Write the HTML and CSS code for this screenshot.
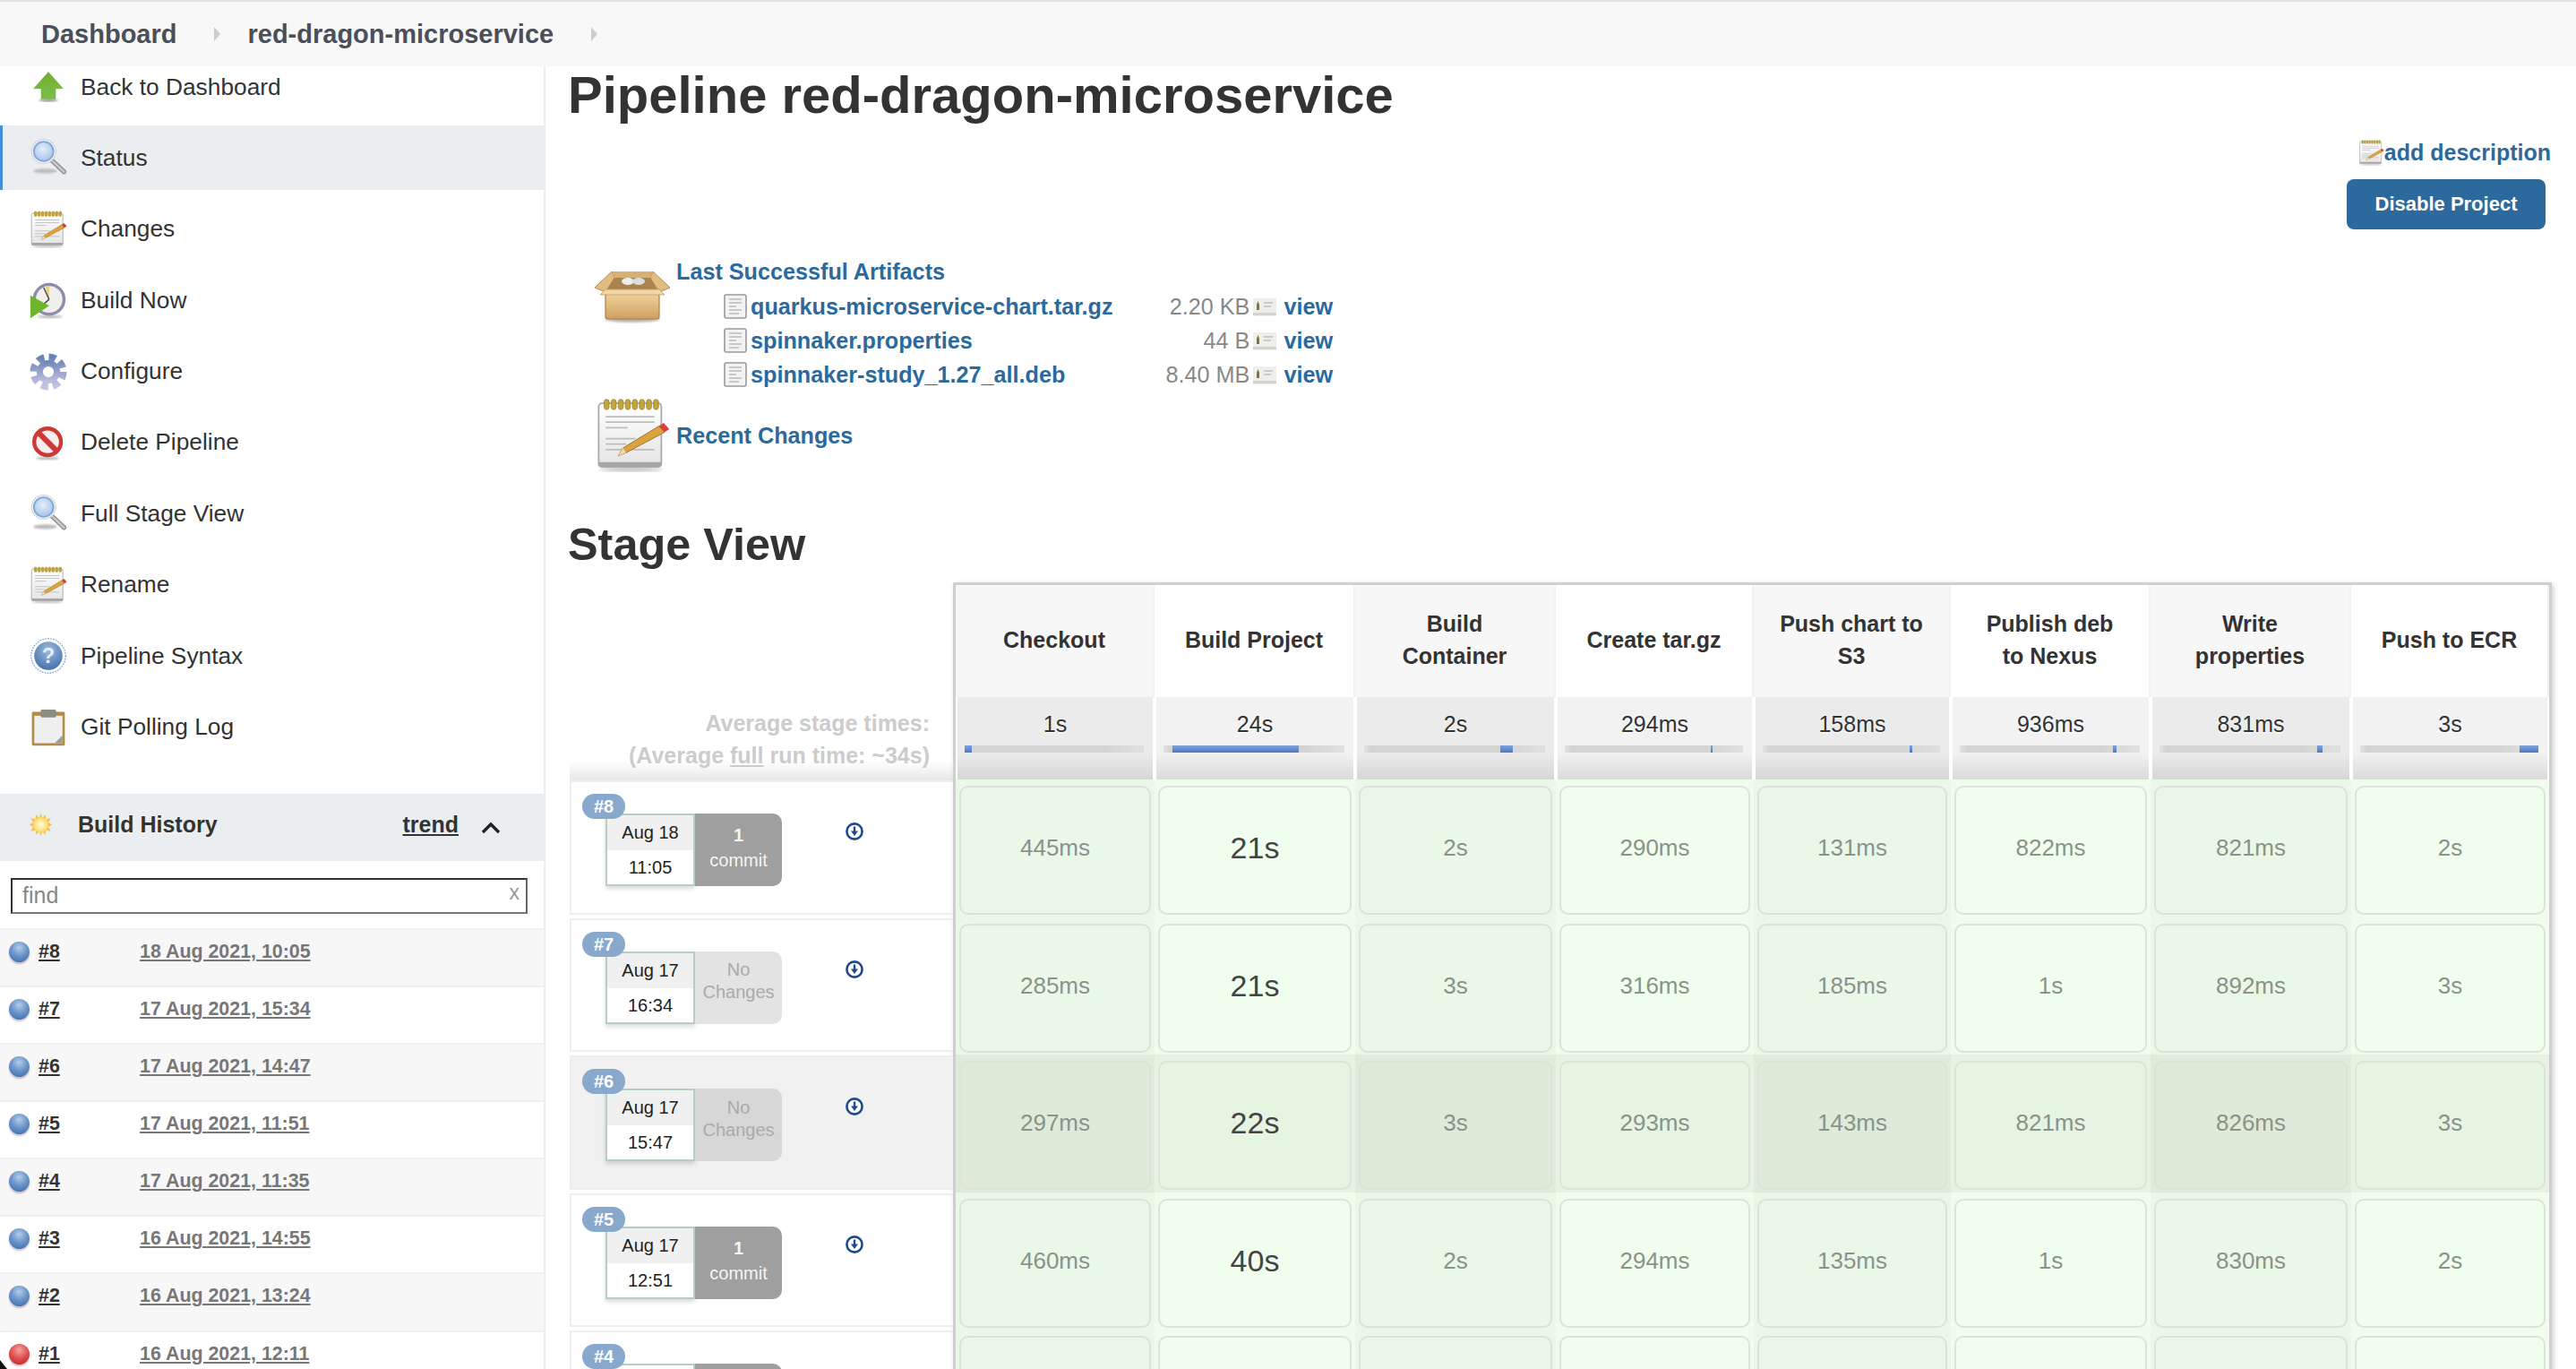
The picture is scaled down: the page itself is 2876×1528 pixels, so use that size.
FILE: index.html
```html
<!DOCTYPE html>
<html lang="en">
<head>
    <meta charset="UTF-8">
    <title>red-dragon-microservice [Jenkins]</title>
    <link rel="stylesheet" href="styles.css">
</head>
<body>
    <!-- shared icons -->
    <svg class="svg-defs" aria-hidden="true">
        <defs>
            <filter id="soft"><feGaussianBlur stdDeviation="1.4"/></filter>
            <linearGradient id="gArrow" x1="0" y1="0" x2="0" y2="1"><stop offset="0" stop-color="#6fae2f"/><stop offset="1" stop-color="#7cc04a"/></linearGradient>
            <radialGradient id="gLens" cx=".45" cy=".4" r=".6"><stop offset="0" stop-color="#e6effa"/><stop offset="1" stop-color="#a6c4ea"/></radialGradient>
            <linearGradient id="gPage" x1="0" y1="0" x2="0" y2="1"><stop offset="0" stop-color="#fff"/><stop offset="1" stop-color="#e4e4e4"/></linearGradient>
            <linearGradient id="gGear" x1="0" y1="0" x2="0" y2="1"><stop offset="0" stop-color="#6b82b4"/><stop offset="1" stop-color="#c6c4e4"/></linearGradient>
            <radialGradient id="gHelp" cx=".5" cy=".3" r=".75"><stop offset="0" stop-color="#9dbbe0"/><stop offset="1" stop-color="#3f6ca8"/></radialGradient>
            <radialGradient id="gSun" cx=".5" cy=".5" r=".5"><stop offset="0" stop-color="#fffde0"/><stop offset="1" stop-color="#f9d65c"/></radialGradient>
            <linearGradient id="gBox" x1="0" y1="0" x2="0" y2="1"><stop offset="0" stop-color="#f0d29c"/><stop offset="1" stop-color="#cf9f60"/></linearGradient>

            <symbol id="i-up" viewBox="0 0 48 48">
                <ellipse cx="24" cy="41" rx="12" ry="2" fill="#999" filter="url(#soft)"/>
                <path d="M24 5 42.5 26H33V39H15V26H5.5Z" fill="url(#gArrow)" stroke="#5f9c28" stroke-width=".6"/>
            </symbol>
            <symbol id="i-search" viewBox="0 0 48 48">
                <ellipse cx="20" cy="41" rx="15" ry="3" fill="#bbb" filter="url(#soft)"/>
                <path d="M28 27 44 42" stroke="#8f8f8f" stroke-width="6" stroke-linecap="round"/>
                <path d="M28 27 44 42" stroke="#c9c9c9" stroke-width="3" stroke-linecap="round"/>
                <circle cx="18" cy="16" r="15.5" fill="#f1f1f1" stroke="#c5c5c5" stroke-width="1.2" stroke-dasharray="2 1"/>
                <circle cx="18" cy="16" r="12.5" fill="url(#gLens)" stroke="#7fa6da" stroke-width="2"/>
            </symbol>
            <symbol id="i-notepad" viewBox="0 0 48 48">
                <ellipse cx="23" cy="45.5" rx="20" ry="1.6" fill="#bbb" filter="url(#soft)"/>
                <rect x="2.5" y="3.5" width="40" height="40.5" rx="2" fill="url(#gPage)" stroke="#a8a8a8"/>
                <rect x="2.5" y="41" width="40" height="3" rx="1" fill="#a6a6a6"/>
                <g fill="#c4a53c" stroke="#8d7a2c" stroke-width=".4">
                    <rect x="6" y="1" width="3.2" height="6.5" rx="1.6"/><rect x="10.5" y="1" width="3.2" height="6.5" rx="1.6"/>
                    <rect x="15" y="1" width="3.2" height="6.5" rx="1.6"/><rect x="19.5" y="1" width="3.2" height="6.5" rx="1.6"/>
                    <rect x="24" y="1" width="3.2" height="6.5" rx="1.6"/><rect x="28.5" y="1" width="3.2" height="6.5" rx="1.6"/>
                    <rect x="33" y="1" width="3.2" height="6.5" rx="1.6"/><rect x="37.5" y="1" width="3.2" height="6.5" rx="1.6"/>
                </g>
                <path d="M7 12H38M7 15.5H38M7 19H21M7 26H26M7 29.5H20M7 33H38" stroke="#bdbdbd" stroke-width="1"/>
                <path d="M15 37 18 32 41 18 44.5 22 20 35Z" fill="#dda23c" stroke="#98692a" stroke-width=".5"/>
                <path d="M15 37 18 32 20 35Z" fill="#efdcb6"/>
                <path d="M41 18 44 16 47.5 20 44.5 22Z" fill="#d8413a"/>
            </symbol>
            <symbol id="i-build" viewBox="0 0 48 48">
                <ellipse cx="26" cy="45" rx="16" ry="2" fill="#bbb" filter="url(#soft)"/>
                <circle cx="25" cy="23" r="21" fill="#8d8cae"/>
                <circle cx="25" cy="23" r="17" fill="#f0efea"/>
                <path d="M25 23 20 6A17 17 0 0 1 25 6Z" fill="#e3cf7f"/>
                <path d="M25 23 18 8M25 23 17 30" stroke="#444" stroke-width="1.6"/>
                <path d="M1 18 25 31 1 47Z" fill="#6cb52d"/>
            </symbol>
            <symbol id="i-gear" viewBox="0 0 48 48">
                <circle cx="24" cy="24" r="15" fill="url(#gGear)"/>
                <circle cx="24" cy="24" r="19" fill="none" stroke="url(#gGear)" stroke-width="9" stroke-dasharray="9 5.92"/>
                <circle cx="24" cy="24" r="7" fill="#fff"/>
            </symbol>
            <symbol id="i-delete" viewBox="0 0 48 48">
                <ellipse cx="23" cy="44" rx="15" ry="2" fill="#bbb" filter="url(#soft)"/>
                <circle cx="23" cy="23" r="17" fill="#f7eeee" stroke="#cc3a38" stroke-width="5"/>
                <path d="M11 11 35 35" stroke="#cc3a38" stroke-width="7"/>
            </symbol>
            <symbol id="i-help" viewBox="0 0 48 48">
                <circle cx="24" cy="24" r="22" fill="#fff" stroke="#8fa9d3" stroke-width="1.6" stroke-dasharray="2 1.4"/>
                <circle cx="24" cy="24" r="18" fill="url(#gHelp)"/>
                <text x="24" y="33" text-anchor="middle" class="help-mark">?</text>
            </symbol>
            <symbol id="i-log" viewBox="0 0 48 48">
                <rect x="3" y="4" width="42" height="43" rx="1.5" fill="#b48a47"/>
                <rect x="6" y="9" width="36" height="35" fill="#efefef"/>
                <path d="M42 34V44H32Z" fill="#9c9c9c"/>
                <rect x="14" y="1" width="20" height="10" rx="2" fill="#8c8c80"/>
            </symbol>
            <symbol id="i-file" viewBox="0 0 26 28">
                <rect x="1" y="1" width="24" height="26" rx="2" fill="#f3f3f3" stroke="#9a9a9a" stroke-width="1.6"/>
                <path d="M6 6H20M6 10H20M6 14H14M6 18H20M6 22H17" stroke="#bbb" stroke-width="1.4"/>
            </symbol>
            <symbol id="i-view" viewBox="0 0 28 28">
                <rect x="1" y="5" width="26" height="20" rx="1" fill="#eeeeea"/>
                <rect x="1" y="21" width="26" height="3" fill="#d2d2ce"/>
                <path d="M5 18V12L6.5 8 8 12V18Z" fill="#7a7a2e"/>
                <path d="M13 10H23M13 14H21" stroke="#aaa" stroke-width="1.2"/>
            </symbol>
            <symbol id="i-download" viewBox="0 0 22 22">
                <circle cx="11" cy="11" r="8.6" fill="#fff" stroke="#1f4a8c" stroke-width="2.6"/>
                <path d="M11 5.5V11" stroke="#1f4a8c" stroke-width="2.4"/>
                <path d="M7 10.5H15L11 16Z" fill="#1f4a8c"/>
            </symbol>
        </defs>
    </svg>

    <header class="topbar">
        <a class="crumb" href="#">Dashboard</a>
        <span class="crumb-sep first"></span>
        <a class="crumb" href="#">red-dragon-microservice</a>
        <span class="crumb-sep"></span>
    </header>

    <div class="page">
        <aside class="sidebar">
            <nav class="tasks">
                <a class="task" href="#"><svg class="task-icon"><use href="#i-up"/></svg>Back to Dashboard</a>
                <a class="task active" href="#"><svg class="task-icon"><use href="#i-search"/></svg>Status</a>
                <a class="task" href="#"><svg class="task-icon"><use href="#i-notepad"/></svg>Changes</a>
                <a class="task" href="#"><svg class="task-icon"><use href="#i-build"/></svg>Build Now</a>
                <a class="task" href="#"><svg class="task-icon"><use href="#i-gear"/></svg>Configure</a>
                <a class="task" href="#"><svg class="task-icon"><use href="#i-delete"/></svg>Delete Pipeline</a>
                <a class="task" href="#"><svg class="task-icon"><use href="#i-search"/></svg>Full Stage View</a>
                <a class="task" href="#"><svg class="task-icon"><use href="#i-notepad"/></svg>Rename</a>
                <a class="task" href="#"><svg class="task-icon"><use href="#i-help"/></svg>Pipeline Syntax</a>
                <a class="task" href="#"><svg class="task-icon"><use href="#i-log"/></svg>Git Polling Log</a>
            </nav>

            <section class="history">
                <div class="history-head">
                    <svg class="sun" viewBox="0 0 24 24">
                        <path d="M12 0 13.5 5 17 1.5 17.5 6.5 22.5 5 20 9.5 24 12 20 14.5 22.5 19 17.5 17.5 17 22.5 13.5 19 12 24 10.5 19 7 22.5 6.5 17.5 1.5 19 4 14.5 0 12 4 9.5 1.5 5 6.5 6.5 7 1.5 10.5 5Z" fill="#f6b64a"/>
                        <circle cx="12" cy="12" r="8.5" fill="url(#gSun)"/>
                    </svg>
                    <span class="history-title">Build History</span>
                    <a class="trend" href="#">trend</a>
                    <svg class="chevron" viewBox="0 0 22 14"><path d="M2 12 11 3 20 12" fill="none" stroke="#222" stroke-width="3.4"/></svg>
                </div>
                <div class="find">
                    <input class="find-input" type="text" placeholder="find">
                    <span class="find-clear">x</span>
                </div>
                <div class="build-row"><i class="ball"></i><a class="build-no" href="#">#8</a><a class="build-date" href="#">18 Aug 2021, 10:05</a></div>
                <div class="build-row"><i class="ball"></i><a class="build-no" href="#">#7</a><a class="build-date" href="#">17 Aug 2021, 15:34</a></div>
                <div class="build-row"><i class="ball"></i><a class="build-no" href="#">#6</a><a class="build-date" href="#">17 Aug 2021, 14:47</a></div>
                <div class="build-row"><i class="ball"></i><a class="build-no" href="#">#5</a><a class="build-date" href="#">17 Aug 2021, 11:51</a></div>
                <div class="build-row"><i class="ball"></i><a class="build-no" href="#">#4</a><a class="build-date" href="#">17 Aug 2021, 11:35</a></div>
                <div class="build-row"><i class="ball"></i><a class="build-no" href="#">#3</a><a class="build-date" href="#">16 Aug 2021, 14:55</a></div>
                <div class="build-row"><i class="ball"></i><a class="build-no" href="#">#2</a><a class="build-date" href="#">16 Aug 2021, 13:24</a></div>
                <div class="build-row"><i class="ball red"></i><a class="build-no" href="#">#1</a><a class="build-date" href="#">16 Aug 2021, 12:11</a></div>
            </section>
        </aside>

        <main class="main">
            <h1 class="title">Pipeline red-dragon-microservice</h1>

            <div class="actions">
                <a class="add-desc" href="#"><svg class="add-icon"><use href="#i-notepad"/></svg>add description</a>
                <button class="disable-btn" type="button">Disable Project</button>
            </div>

            <div class="summary">
                <svg class="box-icon" viewBox="0 0 84 60">
                    <ellipse cx="42" cy="54" rx="31" ry="3.5" fill="#aaa" filter="url(#soft)"/>
                    <path d="M19 2H65L72 22H12Z" fill="#a98350"/>
                    <ellipse cx="37" cy="12" rx="7" ry="4" fill="#eee"/>
                    <ellipse cx="49" cy="12" rx="7" ry="4" fill="#ddd"/>
                    <path d="M19 1 0 19 12 24 22 8Z" fill="#e2bd82" stroke="#b58a50" stroke-width="1"/>
                    <path d="M65 1 84 19 72 24 62 8Z" fill="#e2bd82" stroke="#b58a50" stroke-width="1"/>
                    <path d="M19 1H65L62 8H22Z" fill="#d8b076"/>
                    <rect x="12" y="26" width="60" height="28" rx="3" fill="url(#gBox)" stroke="#ae8045" stroke-width="1.2"/>
                    <path d="M12 21H72L78 27H6Z" fill="#efd7a9" stroke="#c29a60" stroke-width=".8"/>
                </svg>
                <div class="artifacts">
                    <a class="summary-link" href="#">Last Successful Artifacts</a>
                    <div class="file-row"><svg class="file-icon"><use href="#i-file"/></svg><a class="file-name" href="#">quarkus-microservice-chart.tar.gz</a><span class="file-size">2.20 KB</span><svg class="view-icon"><use href="#i-view"/></svg><a class="file-view" href="#">view</a></div>
                    <div class="file-row"><svg class="file-icon"><use href="#i-file"/></svg><a class="file-name" href="#">spinnaker.properties</a><span class="file-size">44 B</span><svg class="view-icon"><use href="#i-view"/></svg><a class="file-view" href="#">view</a></div>
                    <div class="file-row"><svg class="file-icon"><use href="#i-file"/></svg><a class="file-name" href="#">spinnaker-study_1.27_all.deb</a><span class="file-size">8.40 MB</span><svg class="view-icon"><use href="#i-view"/></svg><a class="file-view" href="#">view</a></div>
                </div>
            </div>
            <div class="changes">
                <svg class="changes-icon"><use href="#i-notepad"/></svg>
                <a class="summary-link" href="#">Recent Changes</a>
            </div>

            <h2 class="stage-title">Stage View</h2>

            <div class="stage">
                <div class="builds">
                    <div class="averages">
                        <div>Average stage times:</div>
                        <div>(Average <u>full</u> run time: ~34s)</div>
                    </div>

                    <div class="build">
                        <span class="badge">#8</span>
                        <div class="stamp"><div class="stamp-date">Aug 18</div><div class="stamp-time">11:05</div></div>
                        <div class="commits"><b>1</b><span>commit</span></div>
                        <svg class="dl-icon"><use href="#i-download"/></svg>
                    </div>
                    <div class="build">
                        <span class="badge">#7</span>
                        <div class="stamp"><div class="stamp-date">Aug 17</div><div class="stamp-time">16:34</div></div>
                        <div class="commits none"><span>No</span><span>Changes</span></div>
                        <svg class="dl-icon"><use href="#i-download"/></svg>
                    </div>
                    <div class="build hover">
                        <span class="badge">#6</span>
                        <div class="stamp"><div class="stamp-date">Aug 17</div><div class="stamp-time">15:47</div></div>
                        <div class="commits none"><span>No</span><span>Changes</span></div>
                        <svg class="dl-icon"><use href="#i-download"/></svg>
                    </div>
                    <div class="build">
                        <span class="badge">#5</span>
                        <div class="stamp"><div class="stamp-date">Aug 17</div><div class="stamp-time">12:51</div></div>
                        <div class="commits"><b>1</b><span>commit</span></div>
                        <svg class="dl-icon"><use href="#i-download"/></svg>
                    </div>
                    <div class="build">
                        <span class="badge">#4</span>
                        <div class="stamp"></div>
                        <div class="commits"></div>
                    </div>
                </div>

                <div class="stage-grid">
                    <div class="head">Checkout</div>
                    <div class="head">Build Project</div>
                    <div class="head">Build Container</div>
                    <div class="head">Create tar.gz</div>
                    <div class="head">Push chart to S3</div>
                    <div class="head">Publish deb to Nexus</div>
                    <div class="head">Write properties</div>
                    <div class="head">Push to ECR</div>

                    <div class="avg"><span>1s</span><div class="bar"><i class="bar-fill" style="margin-left:0;width:4%"></i></div></div>
                    <div class="avg"><span>24s</span><div class="bar"><i class="bar-fill" style="margin-left:5%;width:70%"></i></div></div>
                    <div class="avg"><span>2s</span><div class="bar"><i class="bar-fill" style="margin-left:75%;width:7%"></i></div></div>
                    <div class="avg"><span>294ms</span><div class="bar"><i class="bar-fill" style="margin-left:82%;width:1%"></i></div></div>
                    <div class="avg"><span>158ms</span><div class="bar"><i class="bar-fill" style="margin-left:83%;width:1.5%"></i></div></div>
                    <div class="avg"><span>936ms</span><div class="bar"><i class="bar-fill" style="margin-left:85%;width:2%"></i></div></div>
                    <div class="avg"><span>831ms</span><div class="bar"><i class="bar-fill" style="margin-left:87%;width:3%"></i></div></div>
                    <div class="avg"><span>3s</span><div class="bar"><i class="bar-fill" style="margin-left:89.5%;width:10.5%"></i></div></div>

                    <div class="cell"><div class="box">445ms</div></div>
                    <div class="cell"><div class="box big">21s</div></div>
                    <div class="cell"><div class="box">2s</div></div>
                    <div class="cell"><div class="box">290ms</div></div>
                    <div class="cell"><div class="box">131ms</div></div>
                    <div class="cell"><div class="box">822ms</div></div>
                    <div class="cell"><div class="box">821ms</div></div>
                    <div class="cell"><div class="box">2s</div></div>

                    <div class="cell"><div class="box">285ms</div></div>
                    <div class="cell"><div class="box big">21s</div></div>
                    <div class="cell"><div class="box">3s</div></div>
                    <div class="cell"><div class="box">316ms</div></div>
                    <div class="cell"><div class="box">185ms</div></div>
                    <div class="cell"><div class="box">1s</div></div>
                    <div class="cell"><div class="box">892ms</div></div>
                    <div class="cell"><div class="box">3s</div></div>

                    <div class="cell hover"><div class="box">297ms</div></div>
                    <div class="cell hover"><div class="box big">22s</div></div>
                    <div class="cell hover"><div class="box">3s</div></div>
                    <div class="cell hover"><div class="box">293ms</div></div>
                    <div class="cell hover"><div class="box">143ms</div></div>
                    <div class="cell hover"><div class="box">821ms</div></div>
                    <div class="cell hover"><div class="box">826ms</div></div>
                    <div class="cell hover"><div class="box">3s</div></div>

                    <div class="cell"><div class="box">460ms</div></div>
                    <div class="cell"><div class="box big">40s</div></div>
                    <div class="cell"><div class="box">2s</div></div>
                    <div class="cell"><div class="box">294ms</div></div>
                    <div class="cell"><div class="box">135ms</div></div>
                    <div class="cell"><div class="box">1s</div></div>
                    <div class="cell"><div class="box">830ms</div></div>
                    <div class="cell"><div class="box">2s</div></div>

                    <div class="cell"><div class="box"></div></div>
                    <div class="cell"><div class="box"></div></div>
                    <div class="cell"><div class="box"></div></div>
                    <div class="cell"><div class="box"></div></div>
                    <div class="cell"><div class="box"></div></div>
                    <div class="cell"><div class="box"></div></div>
                    <div class="cell"><div class="box"></div></div>
                    <div class="cell"><div class="box"></div></div>
                </div>
            </div>
        </main>
    </div>

    <svg class="cursor-tip" viewBox="0 0 8 10"><path d="M0 0 8 10H0Z" fill="#111"/></svg>
</body>
</html>
```

FILE: styles.css
```css
html, body {
    margin: 0;
    height: 1528px;
    overflow: hidden;
    background: #fff;
}

body {
    font-family: "Liberation Sans", Arial, sans-serif;
    font-size: 26px;
    color: #333;
}

a {
    color: inherit;
    text-decoration: none;
}

.svg-defs {
    position: absolute;
    width: 0;
    height: 0;
}

.help-mark {
    font-family: "Liberation Sans", Arial, sans-serif;
    font-size: 27px;
    font-weight: bold;
    fill: #e8eef8;
}

/* top bar */
.topbar {
    position: relative;
    z-index: 2;
    display: flex;
    align-items: center;
    height: 72px;
    padding-left: 46px;
    background: #f8f8f8;
    border-top: 2px solid #e1e1e6;
    color: #4a4f5a;
    font-size: 29px;
    font-weight: bold;
}

.crumb-sep {
    width: 0;
    height: 0;
    margin: 0 30px 0 42px;
    border-left: 7px solid #ccc;
    border-top: 8px solid transparent;
    border-bottom: 8px solid transparent;
}

/* page */
.page {
    display: flex;
    height: 1454px;
}

.sidebar {
    flex: none;
    width: 607px;
    border-right: 2px solid #eeeeee;
    overflow: hidden;
}

.tasks {
    display: flex;
    flex-direction: column;
    gap: 7.4px;
    margin-top: -13px;
}

.task {
    display: flex;
    align-items: center;
    gap: 15px;
    height: 72px;
    padding-left: 33px;
    font-size: 26.3px;
}

.task.active {
    background: #ebeef1;
    box-shadow: inset 3px 0 0 #3f8fdc;
}

.task-icon {
    flex: none;
    width: 42px;
    height: 42px;
}

/* build history */
.history {
    margin-top: 38.4px;
}

.history-head {
    display: flex;
    align-items: center;
    height: 75px;
    box-sizing: border-box;
    padding: 0 48px 5px 33px;
    background: #ebeef1;
    font-size: 25px;
    font-weight: bold;
}

.sun {
    width: 25px;
    height: 25px;
    margin-right: 29px;
}

.history-title {
    flex: 1;
}

.trend {
    text-decoration: underline;
}

.chevron {
    width: 22px;
    height: 14px;
    margin-left: 25px;
    margin-top: 6px;
}

.find {
    position: relative;
    height: 75px;
    padding: 19px 18px 0 12px;
    box-sizing: border-box;
}

.find-input {
    display: block;
    width: 100%;
    height: 40px;
    box-sizing: border-box;
    padding: 0 40px 0 11px;
    border: 2px solid #333;
    border-right-color: #666;
    border-bottom-color: #777;
    background: #fff;
    font-family: "Liberation Sans", Arial, sans-serif;
    font-size: 25px;
}

.find-input::placeholder {
    color: #888;
    opacity: 1;
}

.find-clear {
    position: absolute;
    right: 27px;
    top: 22px;
    color: #999;
    font-size: 23px;
}

.build-row {
    display: flex;
    align-items: flex-start;
    height: 64.1px;
    box-sizing: border-box;
    padding: 12px 0 0 10px;
    border-top: 2px solid #eef0f2;
    font-size: 21.4px;
    font-weight: bold;
}

.build-row:nth-of-type(odd) {
    background: #f7f7f7;
}

.ball {
    flex: none;
    width: 23px;
    height: 23px;
    margin-top: 1px;
    border-radius: 50%;
    background: radial-gradient(circle at 50% 30%, #b5cdea 0, #6a96cc 45%, #3a659f 100%);
    box-shadow: 0 2px 2px rgba(0, 0, 0, .22);
}

.ball.red {
    background: radial-gradient(circle at 50% 30%, #f3a3a3 0, #e04b4b 50%, #b82020 100%);
}

.build-no {
    width: 113px;
    margin-left: 10px;
    color: #333;
    text-decoration: underline;
}

.build-date {
    color: #777;
    text-decoration: underline;
}

/* main column */
.main {
    flex: 1;
    min-width: 0;
    padding-left: 25px;
    overflow: hidden;
    font-size: 25.2px;
}

.title {
    margin: 0;
    font-size: 58px;
    line-height: 64px;
}

.actions {
    display: flex;
    flex-direction: column;
    align-items: flex-end;
    margin-top: 19px;
    padding-right: 28px;
}

.add-desc {
    display: flex;
    align-items: center;
    height: 27px;
    color: #2b6a9d;
    font-size: 25px;
    font-weight: bold;
}

.add-icon {
    width: 29px;
    height: 29px;
}

.disable-btn {
    width: 222px;
    height: 56px;
    margin-top: 16px;
    margin-right: 6px;
    border: none;
    border-radius: 8px;
    background: #2c6a9e;
    color: #fff;
    font-family: "Liberation Sans", Arial, sans-serif;
    font-size: 22px;
    font-weight: bold;
}

.summary {
    display: flex;
    align-items: flex-start;
    gap: 7px;
    margin: 32px 0 0 30px;
}

.box-icon {
    flex: none;
    width: 84px;
    height: 60px;
    margin-top: 14px;
}

.summary-link {
    display: block;
    line-height: 30px;
    color: #2b6a9d;
    font-weight: bold;
}

.artifacts {
    width: 733px;
}

.file-row {
    display: flex;
    align-items: center;
    height: 38px;
    margin-left: 53px;
}

.artifacts .summary-link {
    margin-bottom: 5px;
}

.file-icon {
    flex: none;
    width: 26px;
    height: 28px;
    margin-right: 4px;
}

.file-name {
    flex: 1;
    color: #2b6a9d;
    font-weight: bold;
}

.file-size {
    color: #888;
}

.view-icon {
    flex: none;
    width: 28px;
    height: 28px;
    margin: 0 7px 0 3px;
}

.file-view {
    color: #2b6a9d;
    font-weight: bold;
}

.changes {
    display: flex;
    align-items: center;
    gap: 7px;
    margin: 7px 0 0 30px;
}

.changes-icon {
    flex: none;
    width: 84px;
    height: 84px;
}

.stage-title {
    margin: 52px 0 14px;
    font-size: 50.4px;
    line-height: 56px;
}

/* stage view */
.stage {
    display: flex;
    width: 2216px;
    margin-left: 2px;
    font-size: 25px;
}

.builds {
    flex: none;
    width: 428px;
}

.averages {
    display: flex;
    flex-direction: column;
    justify-content: flex-end;
    align-items: flex-end;
    height: 221px;
    box-sizing: border-box;
    padding: 0 26px 10px 0;
    background: linear-gradient(#fff 0, #fff 90%, #e8e8e8 100%);
    color: #ccc;
    font-weight: bold;
    line-height: 36px;
}

.build {
    position: relative;
    display: flex;
    align-items: flex-start;
    height: 149.5px;
    margin-bottom: 4px;
    box-sizing: border-box;
    padding: 35px 0 0 38px;
    border: 2px solid #eeeeee;
    border-right: none;
}

.build.hover {
    background: #f1f1f1;
}

.badge {
    position: absolute;
    z-index: 1;
    left: 12px;
    top: 13px;
    width: 48px;
    height: 28px;
    border-radius: 14px;
    background: #88a8cc;
    color: #fff;
    font-size: 20px;
    font-weight: bold;
    line-height: 28px;
    text-align: center;
}

.stamp {
    flex: none;
    width: 100px;
    height: 81px;
    box-sizing: border-box;
    border: 2px solid #b4cfbd;
    background: #fff;
    box-shadow: 0 3px 5px rgba(0, 0, 0, .15);
    font-size: 20px;
    line-height: 39px;
    text-align: center;
    color: #222;
}

.stamp-date {
    background: #f0f0f0;
}

.commits {
    display: flex;
    flex-direction: column;
    align-items: center;
    justify-content: center;
    gap: 5px;
    flex: none;
    width: 97px;
    height: 81px;
    box-sizing: border-box;
    padding-bottom: 4px;
    border-radius: 0 10px 10px 0;
    background: #9f9f9f;
    color: #f4f4f4;
    font-size: 20px;
}

.commits.none {
    gap: 2px;
    padding-bottom: 14px;
    background: #e3e3e3;
    color: #aaa;
}

.build.hover .commits.none {
    background: #d7d7d7;
}

.dl-icon {
    width: 22px;
    height: 22px;
    margin: 9px 0 0 70px;
}

.stage-grid {
    flex: none;
    display: grid;
    grid-template-columns: 222px 224px 224px 221px 220px 223px 224px 1fr;
    grid-template-rows: 125px 92px repeat(5, 153.5px);
    width: 1785px;
    box-sizing: border-box;
    border: 3px solid #cfcfcf;
    border-bottom: none;
    box-shadow: 2px 2px 6px rgba(0, 0, 0, .18);
}

.head {
    display: flex;
    align-items: center;
    justify-content: center;
    padding: 0 27px 3px;
    border-right: 2px solid #f2f2f2;
    color: #333;
    font-weight: bold;
    line-height: 36px;
    text-align: center;
}

.head:nth-child(odd) {
    background: #f7f7f7;
}

.avg {
    box-sizing: border-box;
    margin: 0 2px;
    padding-top: 15px;
    background: linear-gradient(#f2f2f2 0, #f2f2f2 68%, #d9d9d9 100%);
    text-align: center;
}

.avg:nth-child(odd) {
    background: linear-gradient(#ebebeb 0, #ebebeb 68%, #d6d6d6 100%);
}

.avg span {
    display: block;
    line-height: 30px;
    color: #333;
    text-shadow: 0 1px 2px #fff;
}

.bar {
    display: flex;
    height: 8px;
    margin: 9px 10px 0 8px;
    background: linear-gradient(90deg, #e2e2e2 0, #d4d4d4 4%, #d4d4d4 78%, #e0e0e0 100%);
}

.bar-fill {
    display: block;
    height: 8px;
    background: linear-gradient(#7fa3dc, #4d78c8);
}

.cell {
    box-sizing: border-box;
    padding: 7px 4px 2.5px;
    background: #f0fdec;
}

.cell:nth-child(odd) {
    background: #eaf8e7;
}

.box {
    display: flex;
    align-items: center;
    justify-content: center;
    height: 144px;
    box-sizing: border-box;
    padding-bottom: 5px;
    border: 2px solid #dde2db;
    border-radius: 10px;
    background: #f0ffed;
    color: #8a9389;
    font-size: 26px;
}

.cell:nth-child(odd) .box {
    background: #eaf8e7;
}

.cell.hover {
    background: #e6f3e1;
}

.cell.hover:nth-child(odd) {
    background: #deecd9;
}

.cell.hover .box {
    background: #e6f4e2;
}

.cell.hover:nth-child(odd) .box {
    background: #deebd9;
}

.box.big {
    color: #444;
    font-size: 34px;
}

.cursor-tip {
    position: absolute;
    left: 0;
    bottom: 0;
    width: 8px;
    height: 10px;
}
```
